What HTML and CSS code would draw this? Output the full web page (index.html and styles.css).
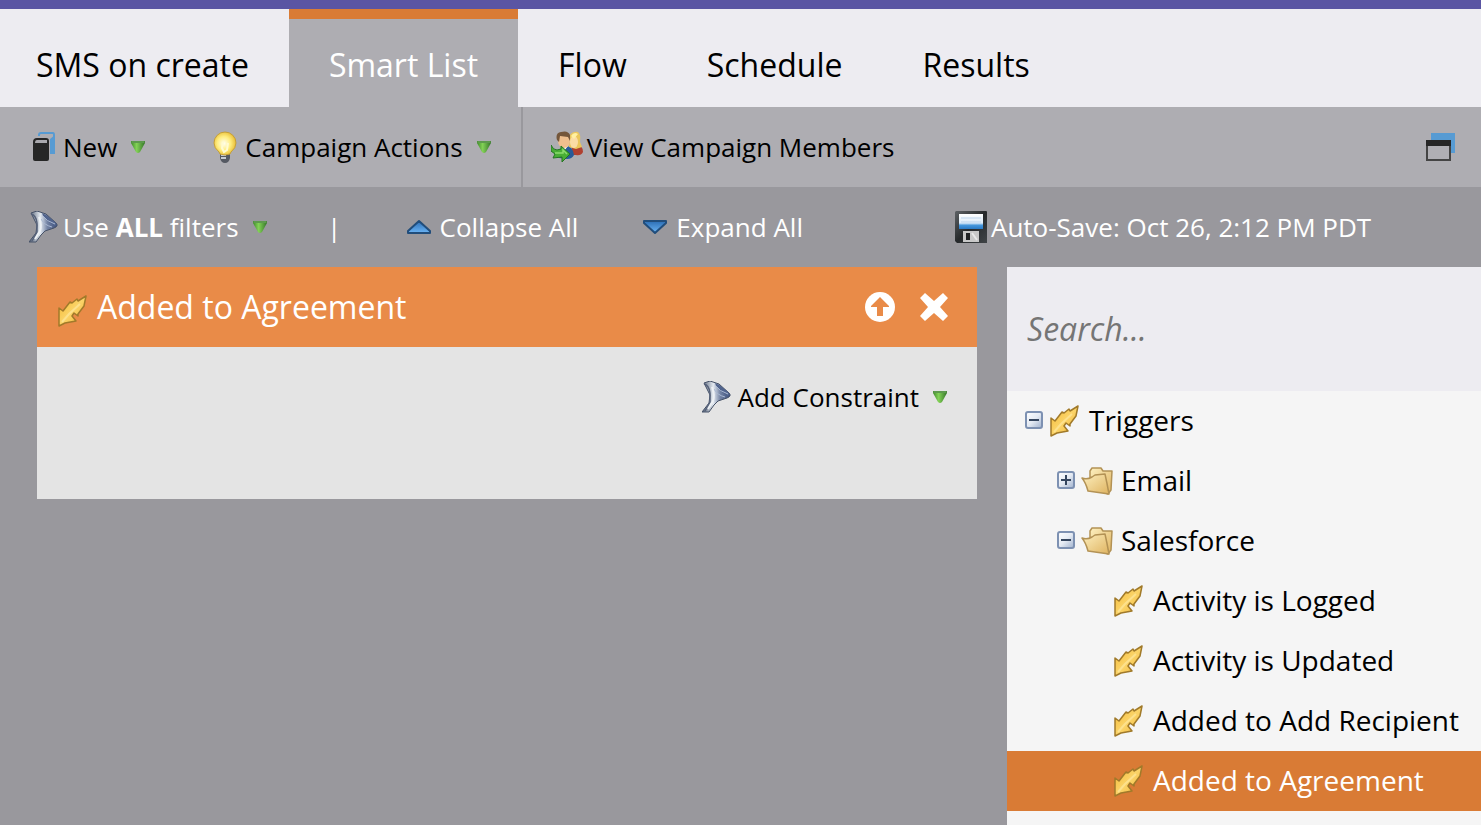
FILE: index.html
```html
<!DOCTYPE html>
<html lang="en">
<head>
<meta charset="utf-8">
<title>SMS on create - Smart List</title>
<link rel="stylesheet" href="styles.css">
</head>
<body>
<svg class="defs" aria-hidden="true">
  <defs>
    <linearGradient id="g-green" x1="0" y1="0" x2="1" y2="0"><stop offset="0" stop-color="#3f8a2b"/><stop offset=".4" stop-color="#83d256"/><stop offset="1" stop-color="#35752a"/></linearGradient>
    <linearGradient id="g-blue" x1="0" y1="0" x2="0" y2="1"><stop offset="0" stop-color="#2b6db4"/><stop offset="1" stop-color="#6cb5f5"/></linearGradient>
    <linearGradient id="g-gold" x1="0" y1="0" x2="1" y2="1"><stop offset="0" stop-color="#f3b62f"/><stop offset=".5" stop-color="#fbd469"/><stop offset="1" stop-color="#eeb02f"/></linearGradient>
    <linearGradient id="g-folder" x1="0" y1="0" x2="1" y2="1"><stop offset="0" stop-color="#fdf0c0"/><stop offset="1" stop-color="#dfb360"/></linearGradient>
    <linearGradient id="g-steel" x1="0" y1="0" x2="1" y2="0"><stop offset="0" stop-color="#4d5a70"/><stop offset=".4" stop-color="#e3e9f0"/><stop offset=".65" stop-color="#7383a4"/><stop offset="1" stop-color="#3c4e7a"/></linearGradient>
    <radialGradient id="g-bulb" cx=".45" cy=".5" r=".55"><stop offset="0" stop-color="#fffef0"/><stop offset=".55" stop-color="#ffed80"/><stop offset="1" stop-color="#e9bd35"/></radialGradient>
    <linearGradient id="g-toggle" x1="0" y1="0" x2="1" y2="1"><stop offset="0" stop-color="#fff"/><stop offset=".5" stop-color="#e4eaf3"/><stop offset="1" stop-color="#9eb0cc"/></linearGradient>
    <linearGradient id="g-label" x1="0" y1="0" x2="0" y2="1"><stop offset="0" stop-color="#fff"/><stop offset=".6" stop-color="#dcebf9"/><stop offset=".75" stop-color="#4496dc"/><stop offset="1" stop-color="#2878c3"/></linearGradient>
    <linearGradient id="g-case" x1="0" y1="0" x2="1" y2="1"><stop offset="0" stop-color="#5e6266"/><stop offset=".5" stop-color="#26292b"/><stop offset="1" stop-color="#404447"/></linearGradient>
  </defs>
  <symbol id="caret" viewBox="0 0 14 12"><path d="M0 0H14V2L9 11Q7 13 5 11L0 2Z" fill="url(#g-green)"/><path d="M.5 1H13.500" stroke="#5d9a4d" stroke-width="2"/></symbol>
  <symbol id="new" viewBox="0 0 32 32"><path d="M8 5V4Q8 2 10 2H22Q23 2 23 4V22H20" fill="none" stroke="#579bd3" stroke-width="2"/><path d="M19 8L24 4V23H19Z" fill="#579bd3"/><path d="M2 11Q2 7 6 7H15Q18 7 18 10V28Q18 30 16 30H4Q2 30 2 28Z" fill="#262626"/><path d="M4 12Q4 9 6 9H16V12H4Z" fill="#aaa9ae"/></symbol>
  <symbol id="bulb" viewBox="0 0 32 32"><path d="M11 23H21V27Q20 32 16 32Q12 32 11 27Z" fill="#555962"/><path d="M12 24H17M12 27H17" stroke="#c6cbd2" stroke-width="2"/><path d="M16 1A11 11 0 0 0 5 12Q5 17 10 21L11 23Q16 25 21 23L22 21Q27 17 27 12A11 11 0 0 0 16 1Z" fill="url(#g-bulb)" stroke="#c59f39"/><path d="M14 11L13 17L15 21L18 19L19 12" fill="none" stroke="#fffbd2" stroke-width="2"/></symbol>
  <symbol id="members" viewBox="0 0 32 32"><path d="M21 24Q19 15 25 14Q32 14 32 21Q30 25 25 24Z" fill="#b04030"/><path d="M18 16L19 4Q22 0 27 1Q30 3 29 11L31 16L25 18Z" fill="#eac65b"/><ellipse cx="23" cy="11" rx="4" ry="6" fill="#fbdca5"/><path d="M20 5Q23 0 27 3L23 8Z" fill="#fff0a1"/><path d="M8 27Q7 16 14 15Q22 15 23 24Q21 28 16 28Z" fill="#285b99"/><path d="M10 15L13 20L17 15Z" fill="#fff"/><ellipse cx="13" cy="10" rx="6" ry="7" fill="#efbf8e"/><path d="M6 9Q4 2 10 1Q17-1 19 4L19 10L17 6L9 5L8 11Z" fill="#74563a"/><path d="M0 14Q2 19 6 19L10 18V15L19 23L11 31V26L2 27L4 23L0 20Z" fill="#49ae35" stroke="#247523"/><path d="M4 22H12V19L16 23" fill="none" stroke="#8cdc6d" stroke-width="1.500"/></symbol>
  <symbol id="windows" viewBox="0 0 32 32"><path d="M7 2H31V22H26V9H7Z" fill="#579bd3"/><rect x="3" y="10" width="23" height="19" fill="#b0afb4" stroke="#444" stroke-width="2"/><path d="M2 9H27V15H2Z" fill="#262626"/></symbol>
  <symbol id="funnel" viewBox="0 0 32 32"><path d="M2 2L8 0L17 3L27 12Q30 15 25 17L16 20L12 24L7 31H0L7 22L8 14Z" fill="url(#g-steel)" stroke="#465268"/><path d="M13 2Q14 8 26 15Q29 14 26 11L17 4Z" fill="#50638d"/><path d="M14 5Q17 10 26 13M12 8Q15 14 23 16" fill="none" stroke="#a9b8d2"/><path d="M2 3Q7 4 8 12L8 21L3 30" fill="none" stroke="#566179" stroke-width="1.500"/><path d="M10 6Q13 14 11 20L6 28" fill="none" stroke="#edf1f5" stroke-width="2"/></symbol>
  <symbol id="up" viewBox="0 0 26 16"><path d="M13 2L24 12V14H2V12Z" fill="url(#g-blue)" stroke="#214d7b" stroke-width="2" stroke-linejoin="round"/></symbol>
  <symbol id="down" viewBox="0 0 26 16"><path d="M2 2H24V4L13 14L2 4Z" fill="url(#g-blue)" stroke="#214d7b" stroke-width="2" stroke-linejoin="round"/></symbol>
  <symbol id="disk" viewBox="0 0 32 32"><path d="M1 0H31Q32 0 32 1V32H2L0 30V1Z" fill="url(#g-case)"/><rect x="4" y="3" width="24" height="15" fill="url(#g-label)"/><path d="M6 7H26M6 11H26" stroke="#bdd5ed"/><rect x="8" y="20" width="16" height="11" fill="#c8c8c8"/><rect x="11" y="22" width="4" height="7" fill="#202224"/><path d="M17 22L22 29" stroke="#e8e8e8" stroke-width="2"/></symbol>
  <symbol id="bolt" viewBox="0 0 32 32"><path d="M29 1L27 11L21 19V21L17 18L15 21L19 26L8 28L2 31V13L6 16L13 7L15 8L20 4L21 6Z" fill="url(#g-gold)" stroke="#a17a2a" stroke-width="1.500" stroke-linejoin="round"/><path d="M5 27L12 19L23 9" fill="none" stroke="#fff0b2" stroke-width="2" opacity=".5"/></symbol>
  <symbol id="folder" viewBox="0 0 32 32"><path d="M9 12V6L11 3H20L22 6H31L30 25L27 29L20 26Z" fill="url(#g-folder)" stroke="#b39255" stroke-width="1.500" stroke-linejoin="round"/><path d="M1 13Q6 15 11 12L14 10L24 9Q26 18 28 29L7 26Q5 18 1 13Z" fill="url(#g-folder)" stroke="#b39255" stroke-width="1.500" stroke-linejoin="round"/></symbol>
  <symbol id="minus" viewBox="0 0 18 18"><rect x="1" y="1" width="16" height="16" rx="2" fill="url(#g-toggle)" stroke="#7d91b2" stroke-width="2"/><path d="M4 9H14" stroke="#34455e" stroke-width="2"/></symbol>
  <symbol id="plus" viewBox="0 0 18 18"><rect x="1" y="1" width="16" height="16" rx="2" fill="url(#g-toggle)" stroke="#7d91b2" stroke-width="2"/><path d="M4 9H14M9 4V14" stroke="#34455e" stroke-width="2"/></symbol>
  <symbol id="move-up" viewBox="0 0 30 30"><circle cx="15" cy="15" r="15" fill="#fff"/><path d="M15 5L24 14V15H18V24H12V15H6V14Z" fill="#e98b48"/></symbol>
  <symbol id="close" viewBox="0 0 30 30"><path d="M6 1L15 9L24 1L29 6L21 15L29 24L24 29L15 21L6 29L1 24L9 15L1 6Z" fill="#fff"/></symbol>
</svg>

<header>
  <nav class="tabs" aria-label="Campaign">
    <a class="tab tab-first" href="#">SMS on create</a>
    <a class="tab tab-active" href="#" aria-current="page">Smart List</a>
    <a class="tab" href="#">Flow</a>
    <a class="tab" href="#">Schedule</a>
    <a class="tab" href="#">Results</a>
  </nav>
  <div class="toolbar">
    <div class="tool-group">
      <button class="tool" type="button"><svg class="icon"><use href="#new"/></svg>New<svg class="caret"><use href="#caret"/></svg></button>
      <button class="tool tool-spaced" type="button"><svg class="icon"><use href="#bulb"/></svg>Campaign Actions<svg class="caret"><use href="#caret"/></svg></button>
    </div>
    <button class="tool tool-spaced" type="button"><svg class="icon"><use href="#members"/></svg>View Campaign Members</button>
    <button class="tool tool-end" type="button" aria-label="Open in new window"><svg class="icon"><use href="#windows"/></svg></button>
  </div>
</header>

<main>
  <div class="filterbar">
    <button class="tool filter-mode" type="button"><svg class="icon"><use href="#funnel"/></svg><span>Use <b>ALL</b> filters</span><svg class="caret"><use href="#caret"/></svg></button>
    <span class="bar">|</span>
    <button class="tool fold" type="button"><svg class="arrow"><use href="#up"/></svg>Collapse All</button>
    <button class="tool fold" type="button"><svg class="arrow"><use href="#down"/></svg>Expand All</button>
    <div class="tool tool-spaced autosave"><svg class="icon"><use href="#disk"/></svg>Auto-Save: Oct 26, 2:12 PM PDT</div>
  </div>
  <div class="workspace">
    <section class="card">
      <div class="card-head">
        <svg class="icon card-icon"><use href="#bolt"/></svg>
        <h1>Added to Agreement</h1>
        <button class="card-action" type="button" aria-label="Move up"><svg><use href="#move-up"/></svg></button>
        <button class="card-action" type="button" aria-label="Remove"><svg><use href="#close"/></svg></button>
      </div>
      <div class="card-body">
        <button class="tool constraint" type="button"><svg class="icon"><use href="#funnel"/></svg>Add Constraint<svg class="caret"><use href="#caret"/></svg></button>
      </div>
    </section>
    <aside class="palette">
      <div class="search"><input type="search" placeholder="Search..." aria-label="Search"></div>
      <ul class="tree">
        <li class="row"><button class="toggle" type="button" aria-label="Collapse Triggers"><svg><use href="#minus"/></svg></button><svg class="icon"><use href="#bolt"/></svg><span>Triggers</span></li>
        <li class="row level-2"><button class="toggle" type="button" aria-label="Expand Email"><svg><use href="#plus"/></svg></button><svg class="icon"><use href="#folder"/></svg><span>Email</span></li>
        <li class="row level-2"><button class="toggle" type="button" aria-label="Collapse Salesforce"><svg><use href="#minus"/></svg></button><svg class="icon"><use href="#folder"/></svg><span>Salesforce</span></li>
        <li class="row level-3"><svg class="icon"><use href="#bolt"/></svg><span>Activity is Logged</span></li>
        <li class="row level-3"><svg class="icon"><use href="#bolt"/></svg><span>Activity is Updated</span></li>
        <li class="row level-3"><svg class="icon"><use href="#bolt"/></svg><span>Added to Add Recipient</span></li>
        <li class="row level-3 selected"><svg class="icon"><use href="#bolt"/></svg><span>Added to Agreement</span></li>
      </ul>
    </aside>
  </div>
</main>
</body>
</html>
```

FILE: styles.css
```css
* {
  box-sizing: border-box;
}

body {
  margin: 0;
  min-height: 100vh;
  display: flex;
  flex-direction: column;
  background: #99989d;
  color: #000;
  font: 26px/36px "Open Sans", "Noto Sans", sans-serif;
}

button {
  padding: 0;
  border: 0;
  background: none;
  color: inherit;
  font: inherit;
  cursor: pointer;
}

svg {
  display: block;
  flex: none;
}

.defs {
  position: absolute;
  width: 0;
  height: 0;
}

.icon {
  width: 32px;
  height: 32px;
}

.caret {
  width: 14px;
  height: 12px;
  margin-left: 14px;
}

.tabs {
  display: flex;
  border-top: 9px solid #5a55a3;
  background: #edecf1;
}

.tab {
  padding: 24px 40px 20px;
  border-top: 10px solid transparent;
  color: #000;
  font-size: 32px;
  line-height: 44px;
  text-decoration: none;
  white-space: nowrap;
}

.tab-first {
  padding-left: 36px;
}

.tab-active {
  border-color: #d97b35;
  background: #aeadb2;
  color: #fff;
}

.toolbar {
  display: flex;
  align-items: stretch;
  height: 80px;
  padding-right: 25px;
  background: #aeadb2;
}

.tool-group {
  display: flex;
  gap: 64px;
  padding: 0 30px 0 31px;
  margin-right: 28px;
  border-right: 2px solid #99989d;
}

.tool {
  display: flex;
  align-items: center;
  white-space: nowrap;
}

.tool-spaced {
  gap: 4px;
}

.tool-spaced .caret {
  margin-left: 10px;
}

.tool-end {
  margin-left: auto;
}

main {
  flex: 1;
  display: flex;
  flex-direction: column;
}

.filterbar {
  display: flex;
  align-items: center;
  height: 80px;
  padding-left: 29px;
  color: #fff;
}

.filter-mode .icon {
  margin-right: 2px;
}

.bar {
  width: 135px;
  margin-right: 4px;
  text-align: center;
}

.fold {
  gap: 8px;
  margin-right: 64px;
}

.arrow {
  width: 26px;
  height: 16px;
}

.autosave {
  margin-left: 88px;
}

.workspace {
  flex: 1;
  display: grid;
  grid-template-columns: 1fr 474px;
  gap: 30px;
  padding-left: 37px;
}

.card {
  align-self: start;
  background: #e4e4e4;
}

.card-head {
  display: flex;
  align-items: center;
  gap: 24px;
  height: 80px;
  padding: 0 28px 0 20px;
  background: #e98b48;
  color: #fff;
}

.card-head h1 {
  flex: 1;
  margin: 0 0 0 -16px;
  font-size: 32px;
  font-weight: 400;
  line-height: 44px;
}

.card-icon {
  margin-top: 8px;
}

.card-action svg {
  width: 30px;
  height: 30px;
}

.card-body {
  display: flex;
  justify-content: flex-end;
  padding: 32px 30px 84px;
}

.constraint .icon {
  margin-right: 4px;
}

.palette {
  background: #f5f5f5;
}

.search {
  padding: 40px 20px;
  background: #edecf1;
}

.search input {
  display: block;
  width: 100%;
  height: 44px;
  padding: 0;
  border: 0;
  outline: 0;
  background: none;
  font: italic 32px/44px "Open Sans", "Noto Sans", sans-serif;
}

.search input::placeholder {
  color: #757575;
}

.tree {
  margin: 0;
  padding: 0;
  list-style: none;
  font-size: 28px;
}

.row {
  display: flex;
  align-items: center;
  height: 60px;
  padding-left: 10px;
  white-space: nowrap;
}

.row .icon {
  margin-right: 8px;
}

.row span {
  padding-bottom: 2px;
}

.level-2 {
  padding-left: 42px;
}

.level-3 {
  padding-left: 106px;
}

.toggle {
  width: 32px;
  padding: 0 0 2px 8px;
}

.toggle svg {
  width: 18px;
  height: 18px;
}

.selected {
  background: #d97b35;
  color: #fff;
}
```
